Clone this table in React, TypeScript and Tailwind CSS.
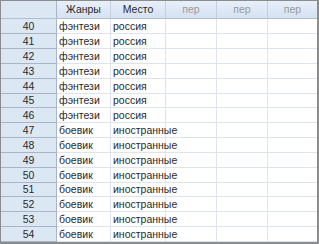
import React from 'react';

const rows = [
  { n: 40, genre: 'фэнтези', place: 'россия' },
  { n: 41, genre: 'фэнтези', place: 'россия' },
  { n: 42, genre: 'фэнтези', place: 'россия' },
  { n: 43, genre: 'фэнтези', place: 'россия' },
  { n: 44, genre: 'фэнтези', place: 'россия' },
  { n: 45, genre: 'фэнтези', place: 'россия' },
  { n: 46, genre: 'фэнтези', place: 'россия' },
  { n: 47, genre: 'боевик', place: 'иностранные' },
  { n: 48, genre: 'боевик', place: 'иностранные' },
  { n: 49, genre: 'боевик', place: 'иностранные' },
  { n: 50, genre: 'боевик', place: 'иностранные' },
  { n: 51, genre: 'боевик', place: 'иностранные' },
  { n: 52, genre: 'боевик', place: 'иностранные' },
  { n: 53, genre: 'боевик', place: 'иностранные' },
  { n: 54, genre: 'боевик', place: 'иностранные' },
];

const cols = 'grid grid-cols-[56px_54px_55px_51px_51px_49px]';

export default function App() {
  return (
    <div className="w-[319px] h-[244px] bg-white overflow-hidden font-['Liberation_Sans',Arial,sans-serif] text-[10.5px] leading-none text-[#2a2a2a]">
      <div className="w-full h-full border-l border-t border-r-2 border-b-2 border-[#8c8c8c]">
        {/* header */}
        <div className={`${cols} h-[18px] border-b border-[#b3bfcf]`}>
          <div className="bg-[#dce7f4] border-r border-[#a9b5c6]" />
          {['Жанры', 'Место'].map((h) => (
            <div
              key={h}
              className="flex items-center justify-center bg-gradient-to-b from-[#e8eff9] to-[#d5e2f2] border-r border-[#c3cfdf]"
            >
              {h}
            </div>
          ))}
          {['пер', 'пер', 'пер'].map((h, i) => (
            <div
              key={i}
              className="flex items-center justify-center bg-gradient-to-b from-[#e8eff9] to-[#d5e2f2] border-r border-[#c3cfdf] last:border-r-0 text-[#9a9a9a]"
            >
              {h}
            </div>
          ))}
        </div>

        {rows.map((r, i) => (
          <div key={r.n} className={`${cols} ${i === 5 || i === 11 ? 'h-[14px]' : 'h-[15px]'}`}>
            <div className="flex items-center justify-center bg-[#dce7f4] border-r border-b border-[#a9b5c6]">
              {r.n}
            </div>
            <div className="flex items-center pl-[2px] border-r border-b border-[#dde4ee]">{r.genre}</div>
            <div className="flex items-center pl-[2px] border-r border-b border-[#dde4ee]">{r.place}</div>
            <div className="border-r border-b border-[#dde4ee]" />
            <div className="border-r border-b border-[#dde4ee]" />
            <div className="border-b border-[#dde4ee]" />
          </div>
        ))}
      </div>
    </div>
  );
}
